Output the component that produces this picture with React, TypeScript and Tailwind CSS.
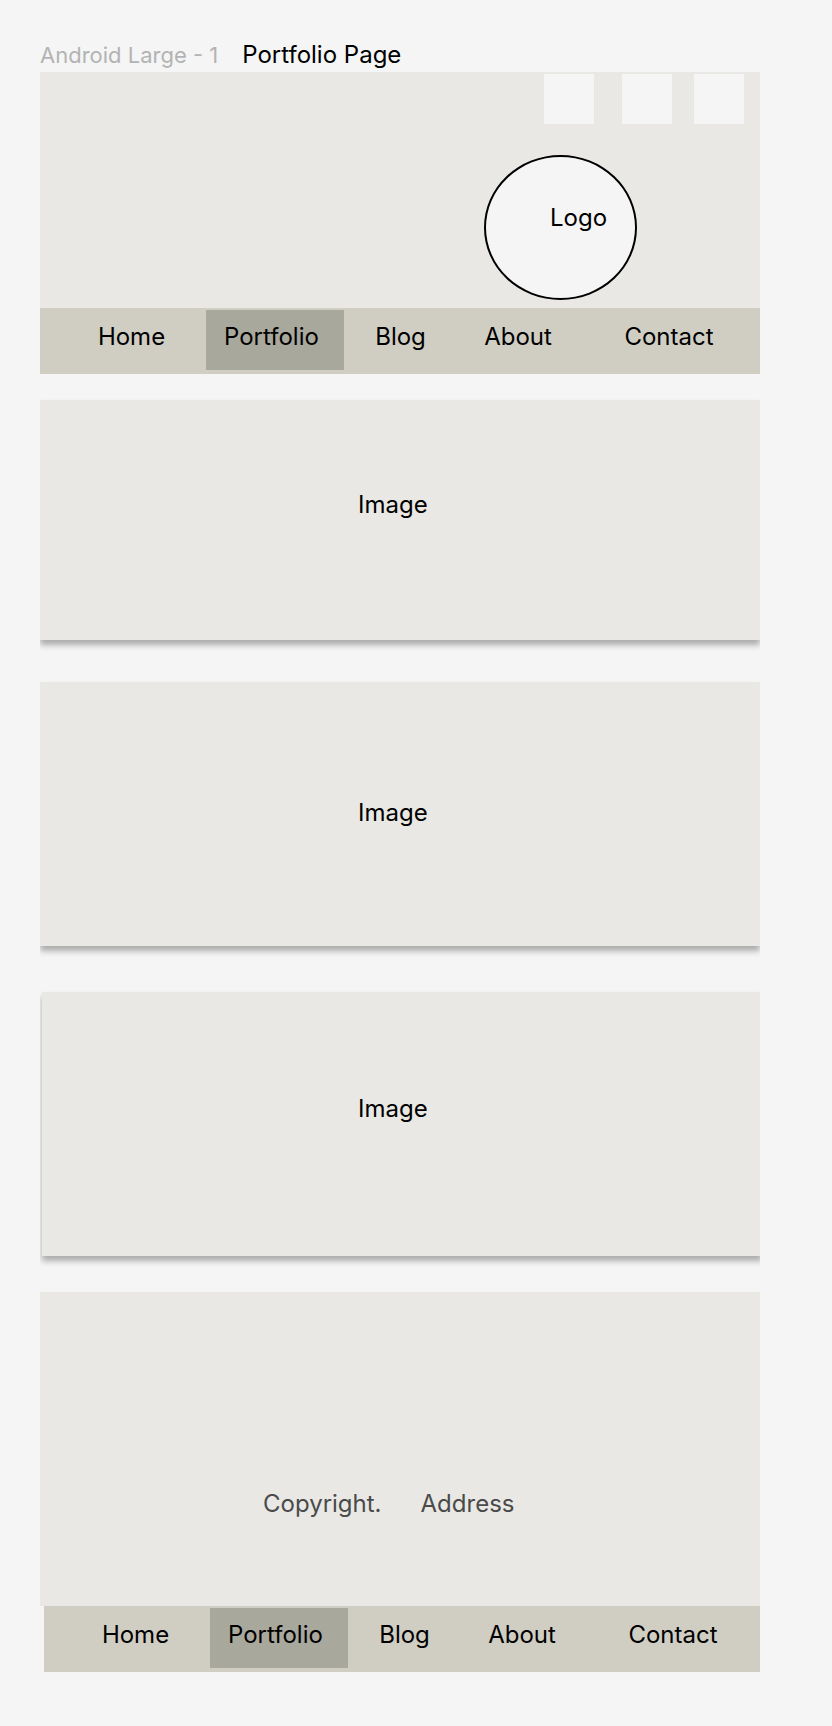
import React from "react";

const font = { fontFamily: "Inter, 'Noto Sans', sans-serif" };

function Nav({ className = "" }: { className?: string }) {
  return (
    <div className={"flex h-[66px] w-[720px] shrink-0 bg-[#d0cec3] text-[24px] leading-[29px] text-black " + className}>
      <div className="ml-[45px] flex w-[93px] justify-center pt-[14px]">Home</div>
      <div className="ml-[28px] mt-[2px] mb-[4px] w-[138px] bg-[#a9a89c] pl-[18px] pt-[12px]">Portfolio</div>
      <div className="flex w-[113px] justify-center pt-[14px]">Blog</div>
      <div className="flex w-[122px] justify-center pt-[14px]">About</div>
      <div className="flex w-[180px] justify-center pt-[14px]">Contact</div>
    </div>
  );
}

function Card({ h, top, className = "", textLeft = 318 }: { h: string; top: string; className?: string; textLeft?: number }) {
  return (
    <div className={"w-[720px] shrink-0 bg-[#e9e8e4] shadow-[0_5px_6px_rgba(0,0,0,0.3)] text-[24px] leading-[29px] text-black " + h + " " + className}>
      <div className={top + (textLeft === 318 ? " pl-[318px]" : " pl-[316px]")}>Image</div>
    </div>
  );
}

export default function App() {
  return (
    <div className="min-h-[1726px] w-[832px] bg-[#f5f5f5] pt-[40px]" style={font}>
      <div className="flex h-[29px] items-baseline pl-[40px] leading-[29px]">
        <span className="text-[22px] text-[#b3b3b3]">Android Large - 1</span>
        <span className="ml-[24px] text-[24px] text-black">Portfolio Page</span>
      </div>
      <div className="ml-[40px] mt-[3px] flex w-[720px] flex-col overflow-hidden bg-[#f5f5f5] pb-[54px]">
        {/* Header */}
        <div className="flex h-[236px] w-[720px] flex-col bg-[#e9e8e4]">
          <div className="mt-[2px] flex h-[50px]">
            <div className="ml-[504px] h-[50px] w-[50px] bg-[#f5f5f5]" />
            <div className="ml-[28px] h-[50px] w-[50px] bg-[#f5f5f5]" />
            <div className="ml-[22px] h-[50px] w-[50px] bg-[#f5f5f5]" />
          </div>
          <div className="ml-[444px] mt-[31px] h-[145px] w-[153px] rounded-[50%] border-2 border-black bg-[#f5f5f5] pl-[64px] pt-[46px] text-[24px] leading-[29px] text-black">
            Logo
          </div>
        </div>
        <Nav />
        <Card h="h-[240px] mt-[26px]" top="pt-[90px]" />
        <Card h="h-[264px] mt-[42px]" top="pt-[116px]" />
        <Card h="h-[264px] mt-[46px] ml-[2px]" top="pt-[102px]" textLeft={316} />
        {/* Footer */}
        <div className="mt-[36px] h-[314px] w-[720px] shrink-0 bg-[#e9e8e4] pt-[197px] text-[24px] leading-[29px] text-[#4a4a4a]">
          <div className="flex">
            <span className="ml-[223px]">Copyright.</span>
            <span className="ml-[39px]">Address</span>
          </div>
        </div>
        <Nav className="ml-[4px]" />
      </div>
    </div>
  );
}
